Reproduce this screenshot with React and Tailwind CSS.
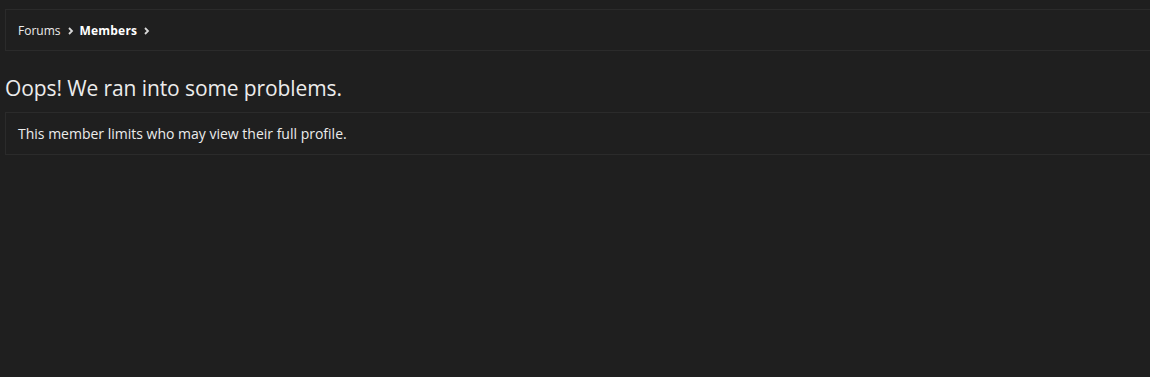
import React from "react";

function Chevron() {
  return (
    <svg width="7" height="8" viewBox="0 0 7 8" className="mx-[6px]" aria-hidden="true">
      <path d="M2 1 L5 4 L2 7" fill="none" stroke="#d8d8d8" strokeWidth="1.8" />
    </svg>
  );
}

export default function App() {
  return (
    <div
      className="min-h-[377px] w-full overflow-hidden bg-[#1f1f1f] text-[#ececec] pl-[5px] pt-[9px]"
      style={{ fontFamily: '"Open Sans", "Noto Sans", sans-serif' }}
    >
      <div className="mr-[-20px] h-[42px] border border-[#2b2b2b] flex items-center pl-[12px] pt-[1px] text-[12px]">
        <span className="text-[#ececec]">Forums</span>
        <Chevron />
        <span className="font-bold text-white tracking-[0.2px]">Members</span>
        <Chevron />
      </div>
      <h1 className="mt-[24px] text-[21px] leading-[26px] text-[#ececec] tracking-[-0.1px]">
        Oops! We ran into some problems.
      </h1>
      <div className="mt-[11px] mr-[-20px] h-[43px] border border-[#2b2b2b] flex items-center pl-[12px] text-[14px] text-[#ececec]">
        This member limits who may view their full profile.
      </div>
    </div>
  );
}
